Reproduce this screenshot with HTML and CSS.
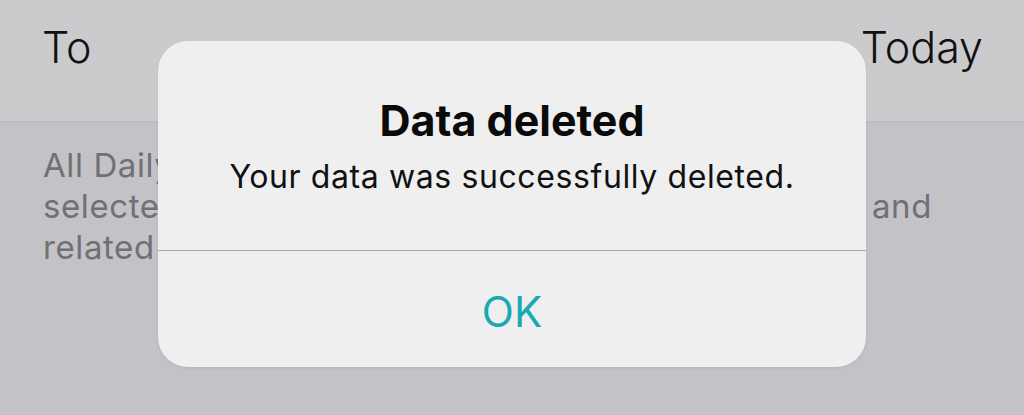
FILE: index.html
```html
<!DOCTYPE html>
<html lang="en">
<head>
    <meta charset="UTF-8">
    <meta name="viewport" content="width=device-width, initial-scale=1.0">
    <title>Data deleted</title>
    <link rel="stylesheet" href="styles.css">
</head>
<body>
<div class="screen">
    <!-- Навигация -->
    <div class="nav-bar">
        <span class="nav-title">To</span>
        <span class="nav-title">Today</span>
    </div>

    <!-- Описание (частично закрыто диалогом) -->
    <div class="note">
        <div class="note-line">All Daily</div>
        <div class="note-line split">
            <span>selected</span>
            <span>and</span>
        </div>
        <div class="note-line">related</div>
    </div>

    <!-- Диалог -->
    <div class="alert">
        <div class="alert-body">
            <h2 class="alert-title">Data deleted</h2>
            <p class="alert-message">Your data was successfully deleted.</p>
        </div>
        <button class="alert-button">OK</button>
    </div>
</div>
</body>
</html>
```

FILE: styles.css
```css
body {
    margin: 0;
    font-family: Inter, "Liberation Sans", sans-serif;
    background-color: #c3c2c7;
}

.screen {
    position: relative;
    width: 1024px;
    height: 415px;
    overflow: hidden;
}

.nav-bar {
    height: 123px;
    background-color: #cbcbcd;
    border-bottom: 2px solid #bdbdc1;
    display: flex;
    justify-content: space-between;
    align-items: flex-start;
    padding: 22px 41px 0 42px;
    box-sizing: border-box;
}

.nav-title {
    font-size: 43px;
    font-weight: 300;
    line-height: 1.2;
    color: #111;
}

.note {
    width: 889px;
    padding: 22px 0 0 43px;
    font-size: 33px;
    line-height: 41px;
    letter-spacing: 0.6px;
    color: #717075;
}

.note-line {
    white-space: nowrap;
}

.note-line.split {
    display: flex;
    justify-content: space-between;
}

.alert {
    position: absolute;
    left: 158px;
    top: 41px;
    width: 708px;
    height: 326px;
    background-color: #efeff0;
    border-radius: 30px;
    box-shadow: 0 1px 3px rgba(0, 0, 0, 0.08);
    display: flex;
    flex-direction: column;
    overflow: hidden;
}

.alert-body {
    height: 210px;
    border-bottom: 1px solid #a9a9ad;
    text-align: center;
    padding-top: 54px;
    box-sizing: border-box;
}

.alert-title {
    margin: 0;
    font-size: 43px;
    font-weight: 700;
    line-height: 1.2;
    color: #0a0a0a;
}

.alert-message {
    margin: 11px 0 0;
    font-size: 32px;
    line-height: 1.2;
    letter-spacing: 0.6px;
    color: #111;
}

.alert-button {
    flex: 1;
    border: none;
    background: none;
    font-family: inherit;
    font-size: 42px;
    font-weight: 400;
    color: #19a9b3;
    cursor: pointer;
    padding: 4px 0 0;
}
```
